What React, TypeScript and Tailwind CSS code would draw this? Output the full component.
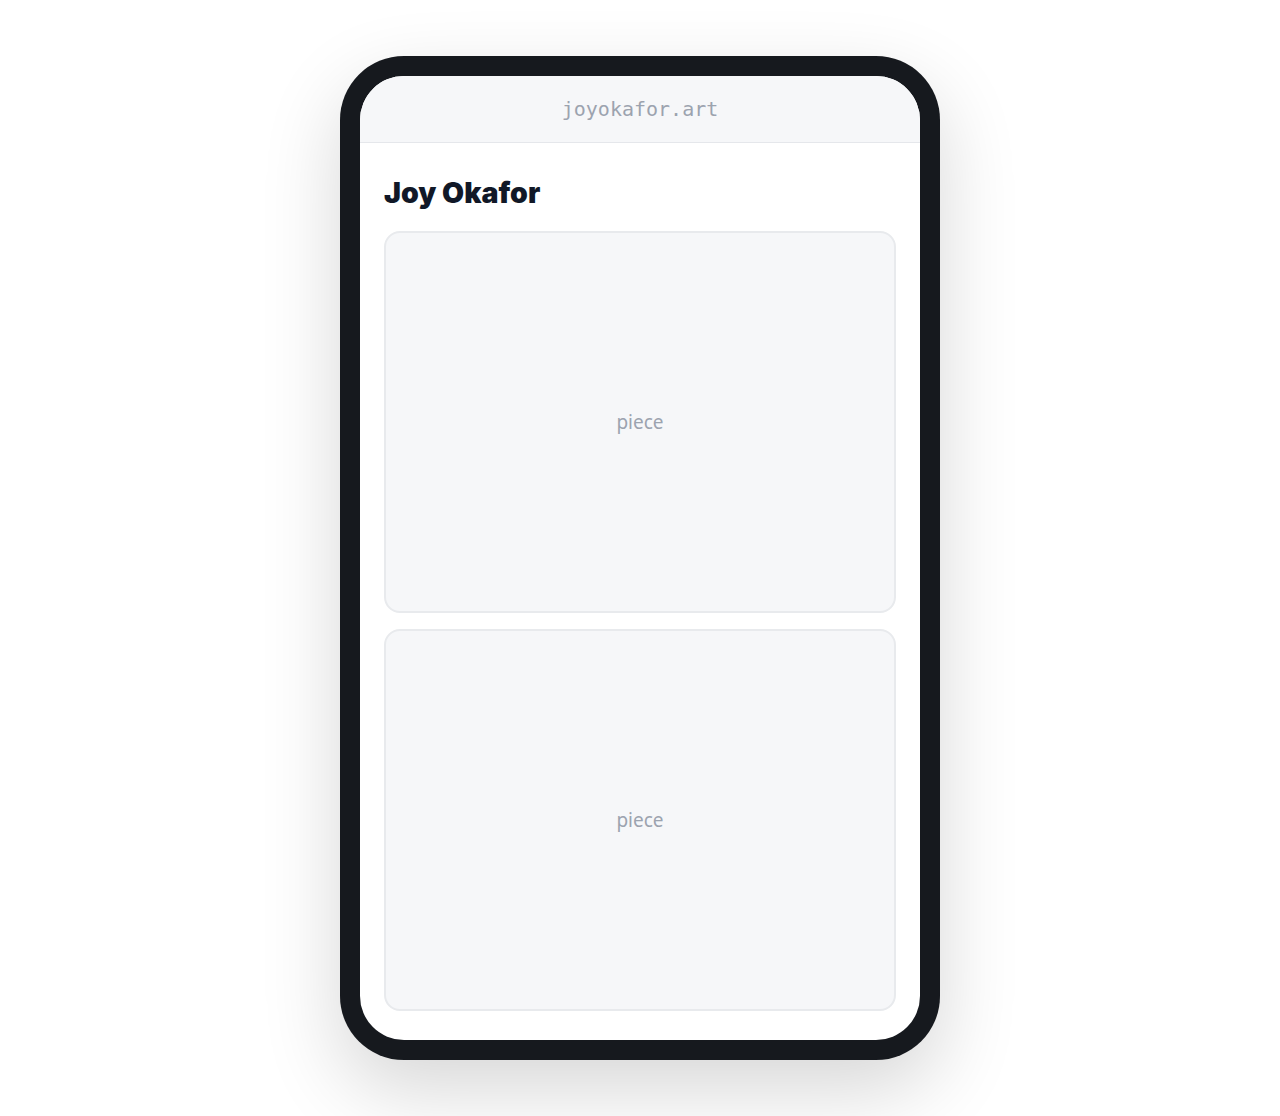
export default function App() {
  return (
    <div className="min-h-screen bg-white flex items-center justify-center py-14">
      <div className="w-[600px] h-[1004px] rounded-[64px] bg-[#16191e] p-5 shadow-[0_30px_80px_rgba(0,0,0,0.16)]">
        <div className="w-full h-full rounded-[44px] bg-white overflow-hidden flex flex-col">
          <div className="h-[67px] shrink-0 bg-[#f6f7f9] border-b border-[#e5e7eb] flex items-center justify-center">
            <span className="text-[20px] text-[#9ca3af] font-['DejaVu_Sans_Mono',monospace]">joyokafor.art</span>
          </div>
          <div className="px-6 pt-[30px] flex flex-col">
            <h1 className="text-[28.5px] leading-[40px] font-black text-[#111827] font-['Inter',sans-serif]">Joy Okafor</h1>
            <div className="mt-[18px] flex flex-col gap-4">
              <div className="h-[382px] rounded-2xl border-2 border-[#e8eaed] bg-[#f6f7f9] flex items-center justify-center">
                <span className="text-[19px] text-[#9ca3af] font-['Noto_Sans',sans-serif]">piece</span>
              </div>
              <div className="h-[382px] rounded-2xl border-2 border-[#e8eaed] bg-[#f6f7f9] flex items-center justify-center">
                <span className="text-[19px] text-[#9ca3af] font-['Noto_Sans',sans-serif]">piece</span>
              </div>
            </div>
          </div>
        </div>
      </div>
    </div>
  );
}
